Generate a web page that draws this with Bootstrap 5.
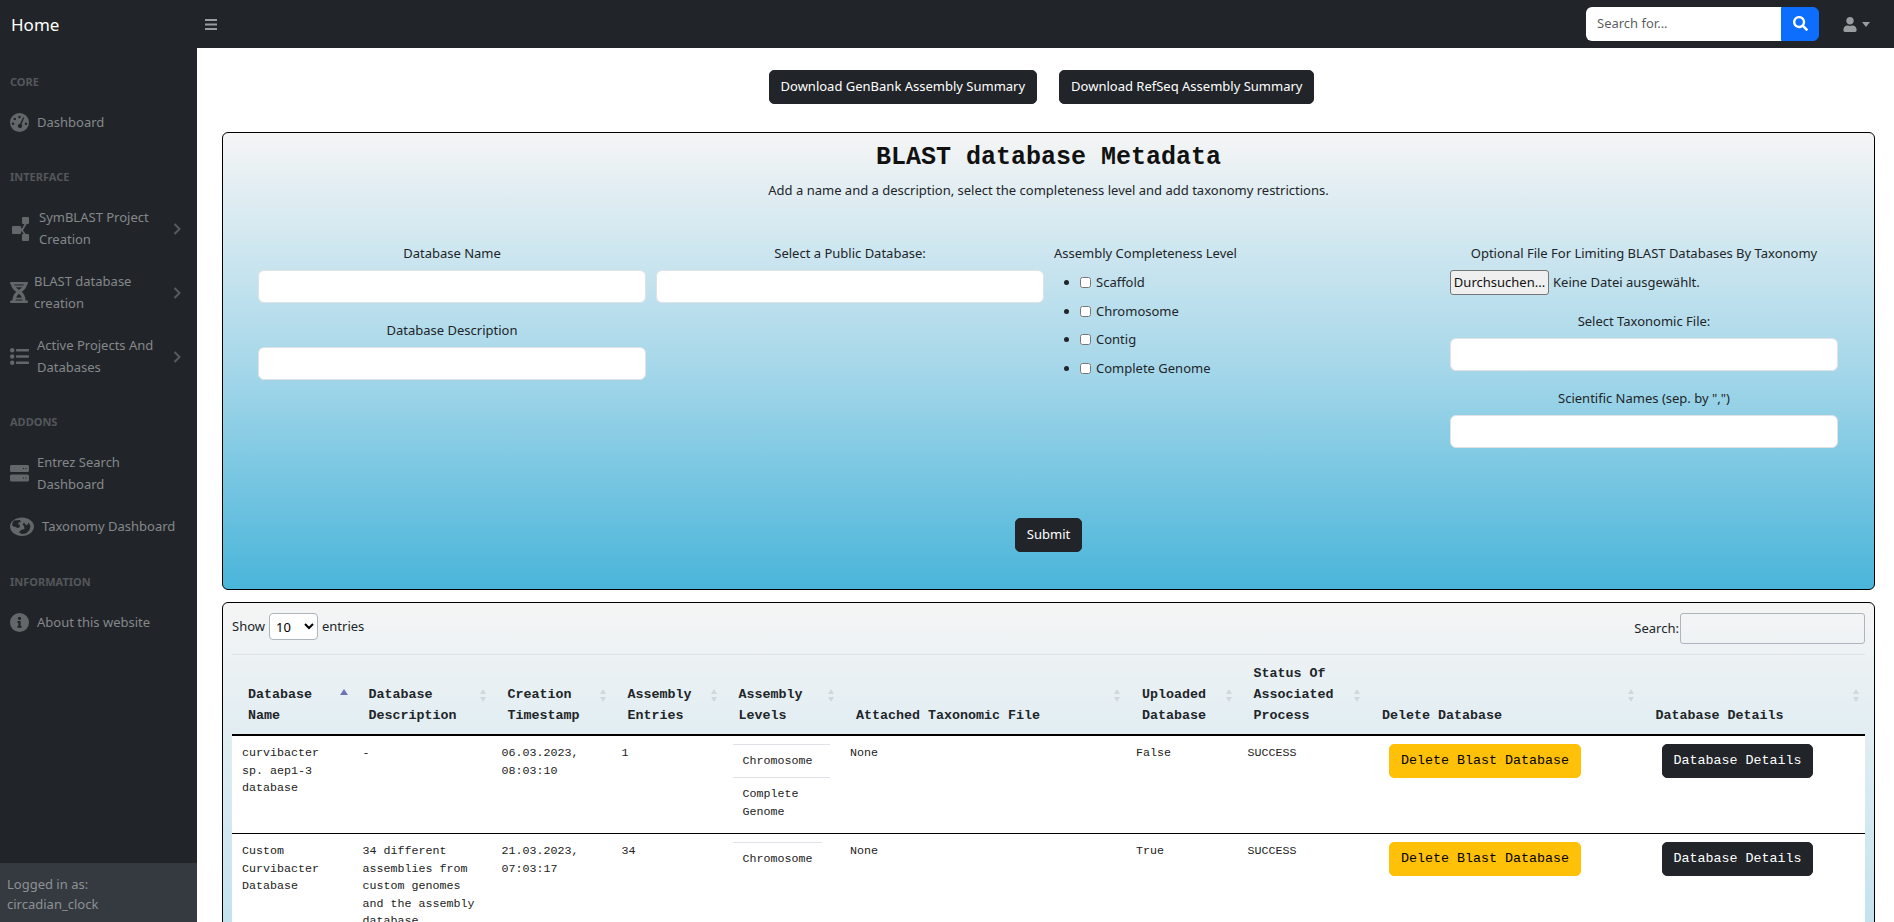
<!DOCTYPE html>
<html lang="en">
<head>
<meta charset="utf-8">
<title>BLAST database Metadata</title>
<link rel="stylesheet" href="https://cdn.jsdelivr.net/npm/bootstrap@5.3.0/dist/css/bootstrap.min.css">
<script src="https://cdn.jsdelivr.net/npm/bootstrap@5.3.0/dist/js/bootstrap.bundle.min.js"></script>
<style>
html,body{height:100%;overflow:hidden}
body{font-family:"Noto Sans","Open Sans",sans-serif;font-size:13px;color:#212529}
.topbar{height:48px;background:#212529;padding-left:11px;padding-right:24px}
.brandlink{width:194px;font-size:17px;color:#fff;text-decoration:none;line-height:1}
.barsbtn{color:#9a9da0;line-height:0}
.searchgrp{width:233px;height:34px;margin-top:-1px}
.searchgrp .form-control{height:34px;font-size:13px;padding-left:11px;padding-bottom:8px;border-radius:6px 0 0 6px}
.searchgrp .btn{width:38px;height:34px;padding:0;border-radius:0 6px 6px 0}
.userbox{margin-left:24px;color:#9a9da0;line-height:0}
.caretmark{border-top:5px solid #9a9da0;border-left:4.5px solid transparent;border-right:4.5px solid transparent;margin-left:5px}
.shell{height:874px}
.sidepane{width:197px;flex:0 0 197px;background:#212529;height:874px}
.sidehead{padding:25px 10px 10px;font-size:11px;line-height:18px;font-weight:700;color:#54575b;text-transform:uppercase}
.sidelink{padding:10.9px 10px 9.900px;line-height:21.6px;font-size:13px;color:#85888b;text-decoration:none}
.sidelink svg.ico{flex:0 0 auto;fill:#64676a}
.chev{flex:0 0 8px;margin-left:auto;margin-right:6px;stroke:#585b5f;fill:none}
.sidefoot{height:59px;background:#343a40;color:#8e9194;padding:11px 7px;line-height:20px;font-size:13px}
.mainpane{min-width:0;overflow:hidden;padding:22px 19px 0 25px}
.darkbtn{background:#212529;color:#fff;border:1px solid #212529;font-size:13px;height:34px;padding:0 11px;border-radius:5px}
.darkbtn:hover{background:#212529;color:#fff}
.toprow{gap:22px;margin-bottom:28px;padding-right:14px}
.gradpanel{border:1px solid #000;border-radius:6px;background:linear-gradient(#f5f5f5,#a8d8ea 50%,#4ab5da)}
.metapanel{height:458px;padding:10px 27px 0;margin-bottom:12px}
.metatitle{font-family:"Liberation Mono",monospace;font-weight:700;font-size:25px;line-height:30px;margin:0 0 7px;text-align:center;color:#111}
.metasub{text-align:center;line-height:20px;margin:0}
.metarow{margin-top:43px;display:grid;grid-template-columns:398px 398px 396px 398px}
.metacol{padding:0 2px 0 8px;text-align:center}
.metacol label.cap{display:block;line-height:20px;margin-bottom:7px}
.plain{display:block;width:100%;height:33px;background:#fff;border:1px solid #dfe3e6;border-radius:6px;padding:0;margin-bottom:17px}
.levels{text-align:left}
.levels .cap{margin-bottom:0}
.levels ul{margin:-1px 0 0;padding-left:26px}
.levels li{line-height:20px;height:28.5px;padding-top:3px}
.levels input{margin:0 5px 0 0;vertical-align:-1px;width:11px;height:11px}
.filerow{display:flex;align-items:center;height:25px;margin-bottom:16px;text-align:left}
.filebtn{width:99px;height:25px;padding:0;font-size:13px;background:#efefef;border:1px solid #767676;border-radius:3px;color:#111;margin-right:4px}
.submitrow{margin-top:53px}
.submitbtn{height:34px;padding:0 11px}
.listpanel{height:1000px;padding:10px 9px 0}
.dtbar{height:41px;font-size:13px}
.dtbar select{width:49px;height:27px;font-size:13px;border:1px solid #adb5bd;border-radius:4px;background:#fff;margin:0 4px;padding:0 2px}
.dtsearch{height:31px;width:185px;border:1px solid #adb5bd;border-radius:3px;background:transparent;margin-left:1px}
.dtsearchwrap{margin-top:6px}
.datatab{table-layout:fixed;width:1633px;border-collapse:collapse;font-family:"Liberation Mono",monospace;border-top:1px solid #dee2e6}
.datatab th{font-size:13.33px;line-height:21px;font-weight:700;padding:8px 10px 8px 16px;vertical-align:bottom;position:relative;border-bottom:2px solid #000}
.datatab td{font-size:11.67px;line-height:17.5px;background:#fff;padding:9px 10px 9px;vertical-align:top;border-bottom:1px solid #000;color:#222}
.datatab>tbody>tr:first-child>td{padding-bottom:12px}
.sortmark{position:absolute;right:5px;top:34px;width:8px;height:13px}
.inner{border-collapse:collapse;margin-top:-1px}
.datatab .inner td{padding:8px 10px 6.5px;border:0;border-top:1px solid #dee2e6}
.datatab .inner tr:last-child td{padding-bottom:0}
.monobtn{font-family:"Liberation Mono",monospace;font-size:13.33px;line-height:20px;height:34px;padding:6px 11px;margin:-1px 0 0 12px;border-radius:5px;white-space:nowrap}
.monobtn.btn-warning{margin-left:13px}
.w1{width:120.5px}.w2{width:139px}.w3{width:120px}.w4{width:111px}.w5{width:117.5px}.w6{width:286px}.w7{width:111.5px}.w8{width:128.5px}.w9{width:273.5px}.w10{width:225.5px}
</style>
</head>
<body>
<nav class="topbar d-flex align-items-center">
  <a class="brandlink" href="#">Home</a>
  <a class="barsbtn" href="#" aria-label="Menu"><svg width="12" height="11" viewBox="0 0 12 11" fill="currentColor"><rect width="12" height="2" y="0"/><rect width="12" height="2" y="4.5"/><rect width="12" height="2" y="9"/></svg></a>
  <div class="ms-auto d-flex align-items-center">
    <div class="input-group searchgrp">
      <input class="form-control border-0" type="text" placeholder="Search for...">
      <button class="btn btn-primary d-flex align-items-center justify-content-center" type="button" aria-label="Search"><svg width="15" height="15" viewBox="0 0 512 512" fill="#fff"><path d="M505 442.700L405.300 343c-4.500-4.500-10.600-7-17-7H372c27.600-35.300 44-79.700 44-128C416 93.100 322.900 0 208 0S0 93.100 0 208s93.100 208 208 208c48.300 0 92.700-16.400 128-44v16.300c0 6.400 2.500 12.500 7 17l99.700 99.700c9.400 9.400 24.600 9.400 33.900 0l28.300-28.300c9.400-9.400 9.400-24.600.1-34zM208 336c-70.700 0-128-57.200-128-128 0-70.700 57.200-128 128-128 70.700 0 128 57.200 128 128 0 70.700-57.200 128-128 128z"/></svg></button>
    </div>
    <a class="userbox d-flex align-items-center" href="#" aria-label="User"><svg width="14" height="15" viewBox="0 0 448 512" fill="currentColor"><path d="M224 256c70.700 0 128-57.300 128-128S294.700 0 224 0 96 57.300 96 128s57.300 128 128 128zm89.600 32h-16.700c-22.200 10.200-46.900 16-72.900 16s-50.600-5.800-72.900-16h-16.700C60.200 288 0 348.200 0 422.400V464c0 26.500 21.500 48 48 48h352c26.500 0 48-21.500 48-48v-41.600c0-74.200-60.200-134.400-134.400-134.400z"/></svg><span class="caretmark"></span></a>
  </div>
</nav>
<div class="shell d-flex">
  <aside class="sidepane d-flex flex-column">
    <div class="flex-grow-1">
      <div class="sidehead">Core</div>
      <a class="sidelink d-flex align-items-center" href="#"><svg class="ico me-2" width="19" height="19" viewBox="0 0 20 20"><path fill-rule="evenodd" d="M10 0a10 10 0 1 1 0 20a10 10 0 0 1 0-20zM10 3a1.300 1.300 0 1 0 0 2.600a1.300 1.300 0 0 0 0-2.600zM5 5a1.300 1.300 0 1 0 0 2.600a1.300 1.300 0 0 0 0-2.600zM3.200 10a1.300 1.300 0 1 0 0 2.600a1.300 1.300 0 0 0 0-2.600zM16.800 10a1.300 1.300 0 1 0 0 2.600a1.300 1.300 0 0 0 0-2.600zM13.800 4.500L10.600 11.200a2.300 2.300 0 1 0 1.500.6L15 5z"/></svg><span>Dashboard</span></a>
      <div class="sidehead">Interface</div>
      <a class="sidelink d-flex align-items-center" href="#"><svg class="ico" width="18" height="24" viewBox="0 0 18 24" style="margin:0 9px 0 2px"><rect x="0" y="9" width="9" height="8" rx="1"/><rect x="10" y="0" width="7" height="7" rx="1"/><rect x="10" y="17" width="7" height="7" rx="1"/><path d="M8 11.500h2L13 6h2.200L11 13.500 14.500 18h-2.200L10 14.500H8z"/></svg><span>SymBLAST Project Creation</span><svg class="chev" width="8" height="12" viewBox="0 0 8 12" stroke-width="2"><path d="M1.500 1l5 5-5 5"/></svg></a>
      <a class="sidelink d-flex align-items-center" href="#"><svg class="ico" width="18" height="21" viewBox="0 0 18 21" style="margin-right:6px"><rect x="0" y="0" width="18" height="2.500" rx="1"/><rect x="0" y="18.500" width="18" height="2.500" rx="1"/><rect x="3.500" y="3.500" width="11" height="1.800"/><rect x="3.500" y="15.700" width="11" height="1.800"/><path d="M1 2h3c.5 2.800 3 4.500 6 6.500 3.800 2.600 5.500 5.500 5.500 10.500h-3c-.3-4.200-2-6.300-5-8.300C4 8.300 1.300 6 1 2z"/><path d="M17 2h-3c-.5 2.800-3 4.500-6 6.500-3.800 2.600-5.500 5.500-5.500 10.500h3c.3-4.200 2-6.300 5-8.300C14 8.300 16.700 6 17 2z"/></svg><span>BLAST database creation</span><svg class="chev" width="8" height="12" viewBox="0 0 8 12" stroke-width="2"><path d="M1.500 1l5 5-5 5"/></svg></a>
      <a class="sidelink d-flex align-items-center" href="#"><svg class="ico me-2" width="19" height="17" viewBox="0 0 19 17"><circle cx="2.200" cy="2.200" r="2.200"/><circle cx="2.200" cy="8.500" r="2.200"/><circle cx="2.200" cy="14.800" r="2.200"/><rect x="6" y="1" width="13" height="2.400" rx=".6"/><rect x="6" y="7.300" width="13" height="2.400" rx=".6"/><rect x="6" y="13.600" width="13" height="2.400" rx=".6"/></svg><span>Active Projects And Databases</span><svg class="chev" width="8" height="12" viewBox="0 0 8 12" stroke-width="2"><path d="M1.500 1l5 5-5 5"/></svg></a>
      <div class="sidehead">Addons</div>
      <a class="sidelink d-flex align-items-center" href="#"><svg class="ico me-2" width="19" height="17" viewBox="0 0 19 17"><path fill-rule="evenodd" d="M1.500 0h16A1.500 1.500 0 0 1 19 1.500v4A1.500 1.500 0 0 1 17.500 7h-16A1.500 1.500 0 0 1 0 5.500v-4A1.500 1.500 0 0 1 1.500 0zM13 3v1h1V3zM15.500 3v1h1V3zM1.500 9.500h16a1.500 1.500 0 0 1 1.500 1.500v4a1.500 1.500 0 0 1-1.500 1.500h-16A1.500 1.500 0 0 1 0 15v-4a1.500 1.500 0 0 1 1.500-1.500zM13 12.500v1h1v-1zM15.500 12.500v1h1v-1z"/></svg><span>Entrez Search Dashboard</span></a>
      <a class="sidelink d-flex align-items-center" href="#"><svg class="ico me-2" width="24" height="19" viewBox="0 0 24 19"><path fill-rule="evenodd" d="M12 .5C18.500.5 24 4.500 24 9.500S18.500 19 12 19 0 14.500 0 9.500 5.500.5 12 .5zM4 3.500C2.500 5 2 7 2.500 9c2 1 4 1 5 2l2-.5.5-2.500-2-1 1-2 2 .5L10 3zM14 5.500l-1.500 2 1.500 1.500.5 3-3.500 1-2 2.500 3 1.500 4-.5 3.500-3.500 1-4-2-3.500-1.500 3-1.500-1z"/></svg><span>Taxonomy Dashboard</span></a>
      <div class="sidehead">Information</div>
      <a class="sidelink d-flex align-items-center" href="#"><svg class="ico me-2" width="19" height="19" viewBox="0 0 20 20"><path fill-rule="evenodd" d="M10 0a10 10 0 1 1 0 20a10 10 0 0 1 0-20zM10 4a1.700 1.700 0 1 0 0 3.400a1.700 1.700 0 0 0 0-3.400zM7.800 8.500v1.800h1v3.400h-1v1.800h4.400v-1.800h-1V8.500z"/></svg><span>About this website</span></a>
    </div>
    <div class="sidefoot">Logged in as:<br>circadian_clock</div>
  </aside>
  <main class="mainpane flex-grow-1">
    <div class="toprow d-flex justify-content-center">
      <button class="btn darkbtn" type="button">Download GenBank Assembly Summary</button>
      <button class="btn darkbtn" type="button">Download RefSeq Assembly Summary</button>
    </div>
    <section class="gradpanel metapanel">
      <h2 class="metatitle">BLAST database Metadata</h2>
      <p class="metasub">Add a name and a description, select the completeness level and add taxonomy restrictions.</p>
      <div class="metarow">
        <div class="metacol">
          <label class="cap">Database Name</label><input class="plain" type="text" aria-label="Database Name">
          <label class="cap">Database Description</label><input class="plain" type="text" aria-label="Database Description">
        </div>
        <div class="metacol">
          <label class="cap">Select a Public Database:</label><input class="plain" type="text" aria-label="Select a Public Database">
        </div>
        <div class="metacol levels">
          <label class="cap">Assembly Completeness Level</label>
          <ul>
            <li><input type="checkbox" id="l1"><label for="l1">Scaffold</label></li>
            <li><input type="checkbox" id="l2"><label for="l2">Chromosome</label></li>
            <li><input type="checkbox" id="l3"><label for="l3">Contig</label></li>
            <li><input type="checkbox" id="l4"><label for="l4">Complete Genome</label></li>
          </ul>
        </div>
        <div class="metacol">
          <label class="cap">Optional File For Limiting BLAST Databases By Taxonomy</label>
          <div class="filerow"><button class="filebtn" type="button">Durchsuchen...</button><span>Keine Datei ausgewählt.</span></div>
          <label class="cap">Select Taxonomic File:</label><input class="plain" type="text" aria-label="Select Taxonomic File">
          <label class="cap">Scientific Names (sep. by ",")</label><input class="plain" type="text" aria-label="Scientific Names">
        </div>
      </div>
      <div class="d-flex justify-content-center submitrow"><button class="btn darkbtn submitbtn" type="button">Submit</button></div>
    </section>
    <section class="gradpanel listpanel">
      <div class="dtbar d-flex justify-content-between">
        <div class="d-flex align-items-start"><span class="mt-1">Show</span><select aria-label="Entries"><option>10</option></select><span class="mt-1">entries</span></div>
        <div class="d-flex align-items-start"><span class="dtsearchwrap">Search:</span><input class="dtsearch" type="text" aria-label="Search"></div>
      </div>
      <table class="datatab">
        <colgroup><col class="w1"><col class="w2"><col class="w3"><col class="w4"><col class="w5"><col class="w6"><col class="w7"><col class="w8"><col class="w9"><col class="w10"></colgroup>
        <thead><tr>
          <th>Database Name<svg class="sortmark" viewBox="0 0 8 13" fill="#6f73b8"><path d="M4 0l4 6H0z"/></svg></th>
          <th>Database Description<svg class="sortmark" viewBox="0 0 8 13" fill="#d0d8de"><path d="M4 0l3 5H1zM4 13l3-5H1z"/></svg></th>
          <th>Creation Timestamp<svg class="sortmark" viewBox="0 0 8 13" fill="#d0d8de"><path d="M4 0l3 5H1zM4 13l3-5H1z"/></svg></th>
          <th>Assembly Entries<svg class="sortmark" viewBox="0 0 8 13" fill="#d0d8de"><path d="M4 0l3 5H1zM4 13l3-5H1z"/></svg></th>
          <th>Assembly Levels<svg class="sortmark" viewBox="0 0 8 13" fill="#d0d8de"><path d="M4 0l3 5H1zM4 13l3-5H1z"/></svg></th>
          <th>Attached Taxonomic File<svg class="sortmark" viewBox="0 0 8 13" fill="#d0d8de"><path d="M4 0l3 5H1zM4 13l3-5H1z"/></svg></th>
          <th>Uploaded Database<svg class="sortmark" viewBox="0 0 8 13" fill="#d0d8de"><path d="M4 0l3 5H1zM4 13l3-5H1z"/></svg></th>
          <th>Status Of Associated Process<svg class="sortmark" viewBox="0 0 8 13" fill="#d0d8de"><path d="M4 0l3 5H1zM4 13l3-5H1z"/></svg></th>
          <th>Delete Database<svg class="sortmark" viewBox="0 0 8 13" fill="#d0d8de"><path d="M4 0l3 5H1zM4 13l3-5H1z"/></svg></th>
          <th>Database Details<svg class="sortmark" viewBox="0 0 8 13" fill="#d0d8de"><path d="M4 0l3 5H1zM4 13l3-5H1z"/></svg></th>
        </tr></thead>
        <tbody>
          <tr>
            <td>curvibacter sp. aep1-3 database</td><td>-</td><td>06.03.2023, 08:03:10</td><td>1</td>
            <td><table class="inner"><tr><td>Chromosome</td></tr><tr><td>Complete Genome</td></tr></table></td>
            <td>None</td><td>False</td><td>SUCCESS</td>
            <td><button class="btn btn-warning monobtn" type="button">Delete Blast Database</button></td>
            <td><button class="btn darkbtn monobtn" type="button">Database Details</button></td>
          </tr>
          <tr>
            <td>Custom Curvibacter Database</td><td>34 different assemblies from custom genomes and the assembly database</td><td>21.03.2023, 07:03:17</td><td>34</td>
            <td><table class="inner"><tr><td>Chromosome</td></tr></table></td>
            <td>None</td><td>True</td><td>SUCCESS</td>
            <td><button class="btn btn-warning monobtn" type="button">Delete Blast Database</button></td>
            <td><button class="btn darkbtn monobtn" type="button">Database Details</button></td>
          </tr>
        </tbody>
      </table>
    </section>
  </main>
</div>
</body>
</html>
